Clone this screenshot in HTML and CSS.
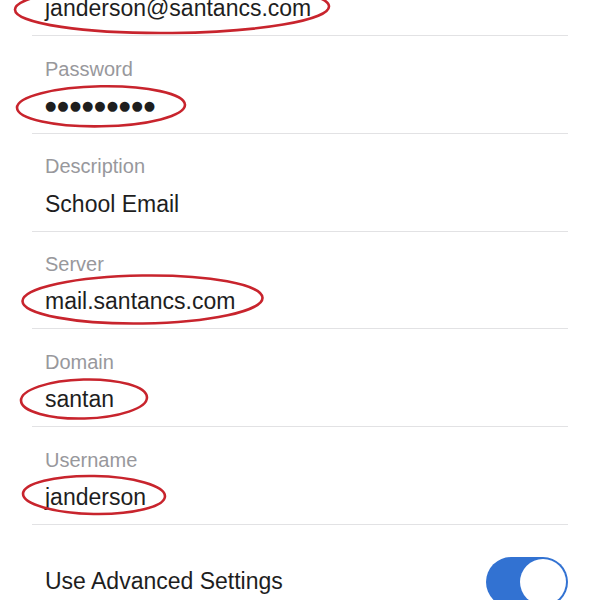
FILE: index.html
```html
<!DOCTYPE html>
<html lang="en">
<head>
    <meta charset="UTF-8">
    <meta name="viewport" content="width=device-width, initial-scale=1.0">
    <title>Exchange Account</title>
    <link rel="stylesheet" href="styles.css">
</head>
<body>

<!-- Account fields -->
<section class="fields">
    <div class="field">
        <div class="label">Email</div>
        <div class="value">janderson@santancs.com
            <svg class="mark"><ellipse cx="127" cy="14" rx="157" ry="25" transform="rotate(-0.6 127 14)"/></svg>
        </div>
    </div>
    <div class="field">
        <div class="label">Password</div>
        <div class="value dots">●●●●●●●●●
            <svg class="mark"><ellipse cx="56" cy="14.3" rx="84" ry="20" transform="rotate(-1 56 14)"/></svg>
        </div>
    </div>
    <div class="field">
        <div class="label">Description</div>
        <div class="value">School Email</div>
    </div>
    <div class="field">
        <div class="label">Server</div>
        <div class="value">mail.santancs.com
            <svg class="mark"><ellipse cx="97.5" cy="12.5" rx="120" ry="24" transform="rotate(-0.8 97 12)"/></svg>
        </div>
    </div>
    <div class="field">
        <div class="label">Domain</div>
        <div class="value">santan
            <svg class="mark"><ellipse cx="39" cy="14" rx="63" ry="19.5" transform="rotate(-1.5 39 14)"/></svg>
        </div>
    </div>
    <div class="field">
        <div class="label">Username</div>
        <div class="value">janderson
            <svg class="mark"><ellipse cx="49" cy="12" rx="71" ry="19" transform="rotate(1 49 12)"/></svg>
        </div>
    </div>

    <div class="switch-row">
        <span>Use Advanced Settings</span>
        <div class="toggle on"><div class="knob"></div></div>
    </div>
</section>

</body>
</html>
```

FILE: styles.css
```css
body {
    font-family: "Liberation Sans", Arial, sans-serif;
    margin: 0;
    padding: 0;
    background-color: white;
    overflow: hidden;
}

.fields {
    margin-top: -61.8px;
}

.field {
    margin: 0 32px;
    padding: 20.5px 0 13px 13px;
    border-bottom: 1px solid #e2e2e4;
}

.label {
    font-size: 20px;
    line-height: 24px;
    color: #98989c;
    margin-bottom: 11.3px;
}

.value {
    position: relative;
    font-size: 23px;
    line-height: 28px;
    color: #1e1e1e;
    white-space: nowrap;
}

.value.dots {
    font-family: "DejaVu Sans", sans-serif;
    font-size: 13px;
    letter-spacing: 1px;
}

.mark {
    position: absolute;
    left: 0;
    top: 0;
    width: 1px;
    height: 1px;
    overflow: visible;
}

.mark ellipse {
    fill: none;
    stroke: #c8242d;
    stroke-width: 2.6;
}

.switch-row {
    margin: 0 32px;
    padding: 32px 0 0 13px;
    display: flex;
    align-items: center;
    justify-content: space-between;
    font-size: 23px;
    color: #1e1e1e;
}

.toggle {
    width: 82px;
    height: 50px;
    border-radius: 25px;
    background-color: #e5e5ea;
    box-sizing: border-box;
    padding: 2px;
    display: flex;
}

.toggle.on {
    background-color: #3272d2;
    justify-content: flex-end;
}

.knob {
    width: 46px;
    height: 46px;
    border-radius: 50%;
    background-color: white;
}
```
